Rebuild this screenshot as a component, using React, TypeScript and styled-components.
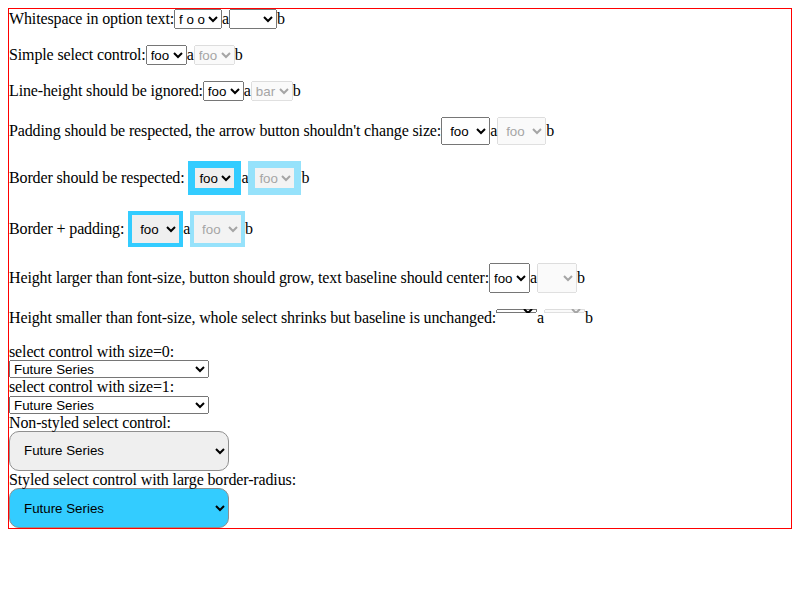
import { FC } from 'react'
import styled, { createGlobalStyle, css } from 'styled-components'

const GlobalStyle = createGlobalStyle`
  body {
    margin: 8px;
    font-family: 'Liberation Serif', 'Times New Roman', serif;
    font-size: 16px;
    letter-spacing: -0.13px;
    color: #000;
    background: #fff;
  }
`

const Frame = styled.div`
  border: 1px solid red;
`

const Row = styled.div`
  margin: 0 0 16px 0;
`

const Label = styled.div`
  line-height: 17.25px;
`

type Kind = 'plain' | 'padded' | 'bordered' | 'borderPadded' | 'tall' | 'short'

const kinds = {
  plain: css`
    height: 20px;
  `,
  padded: css`
    height: 28px;
    padding: 4px;
  `,
  bordered: css`
    height: 34px;
    border: 7px solid #33ccff;
    background: #efefef;
    border-radius: 0;
    &:disabled {
      border-color: rgba(51, 204, 255, 0.7);
    }
  `,
  borderPadded: css`
    height: 36px;
    border: 4px solid #33ccff;
    padding: 4px;
    background: #efefef;
    border-radius: 0;
    &:disabled {
      border-color: rgba(51, 204, 255, 0.7);
    }
  `,
  tall: css`
    height: 30px;
    min-width: 40px;
  `,
  short: css`
    height: 4px;
    padding: 0;
    min-width: 40px;
  `,
}

const Select = styled.select<{ $kind?: Kind; $lh?: boolean }>`
  box-sizing: border-box;
  font-family: 'Liberation Sans', Arial, sans-serif;
  font-size: 13.333px;
  letter-spacing: normal;
  ${(p) => p.$lh && 'line-height: 100px;'}
  ${(p) => kinds[p.$kind ?? 'plain']}
`

const WideSelect = styled.select<{ $round?: boolean; $fill?: string }>`
  display: block;
  box-sizing: border-box;
  font-family: 'Liberation Sans', Arial, sans-serif;
  font-size: 13.333px;
  letter-spacing: normal;
  width: 200px;
  height: 18px;
  ${(p) =>
    p.$round &&
    css`
      width: 220px;
      height: 40px;
      border-radius: 10px;
      padding: 0 10px;
      border: 1px solid #8f8f8f;
      background: ${p.$fill ?? '#efefef'};
    `}
`

type PairProps = {
  label: string
  kind?: Kind
  first?: string
  second?: string
  lh?: boolean
  gap?: boolean
  bothEnabled?: boolean
}

const Pair: FC<PairProps> = ({
  label,
  kind,
  first = 'foo',
  second = 'foo',
  lh,
  gap,
  bothEnabled,
}) => (
  <Row>
    {label}
    {gap && ' '}
    <Select $kind={kind} $lh={lh}>
      <option>{first}</option>
    </Select>
    a
    <Select $kind={kind} $lh={lh} disabled={!bothEnabled}>
      <option>{second}</option>
    </Select>
    b
  </Row>
)

const App: FC = () => (
  <>
    <GlobalStyle />
    <Frame>
      <Pair
        label="Whitespace in option text:"
        first="f o o"
        second={'\u00a0\u00a0\u00a0\u00a0\u00a0\u00a0\u00a0'}
        bothEnabled
      />
      <Pair label="Simple select control:" />
      <Pair label="Line-height should be ignored:" second="bar" lh />
      <Pair label="Padding should be respected, the arrow button shouldn't change size:" kind="padded" />
      <Pair label="Border should be respected:" kind="bordered" gap />
      <Pair label="Border + padding:" kind="borderPadded" gap />
      <Pair
        label="Height larger than font-size, button should grow, text baseline should center:"
        kind="tall"
        second=""
      />
      <Pair
        label="Height smaller than font-size, whole select shrinks but baseline is unchanged:"
        kind="short"
      />
      <Label>select control with size=0:</Label>
      <WideSelect>
        <option>Future Series</option>
      </WideSelect>
      <Label>select control with size=1:</Label>
      <WideSelect size={1}>
        <option>Future Series</option>
      </WideSelect>
      <Label>Non-styled select control:</Label>
      <WideSelect $round>
        <option>Future Series</option>
      </WideSelect>
      <Label>Styled select control with large border-radius:</Label>
      <WideSelect $round $fill="#33ccff">
        <option>Future Series</option>
      </WideSelect>
    </Frame>
  </>
)

export default App
